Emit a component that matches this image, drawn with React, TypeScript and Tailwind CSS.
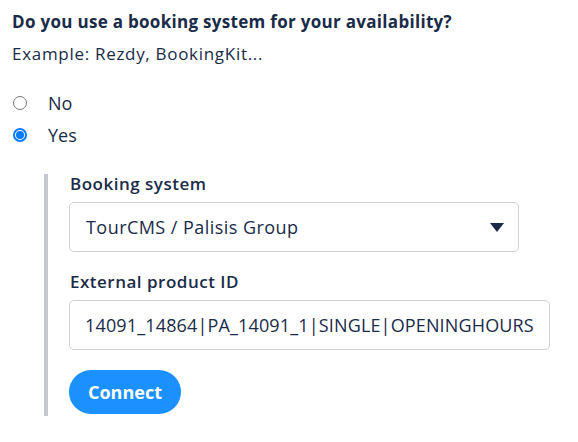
import React from "react";

export default function App() {
  return (
    <div className="w-[578px] h-[442px] bg-white text-[#1a2b49] pl-[12px] pt-[10px]" style={{ fontFamily: "'Open Sans', sans-serif" }}>
      <h2 className="text-[17px] font-bold leading-[24px] tracking-[0.3px]">Do you use a booking system for your availability?</h2>
      <p className="mt-[8px] text-[17px] leading-[24px] tracking-[0.7px]">Example: Rezdy, BookingKit...</p>
      <div className="mt-[25px] flex flex-col gap-[8px]">
        <label className="flex items-center h-[24px]">
          <span className="w-[14px] h-[14px] rounded-full border border-[#767676] bg-white ml-[1px]" />
          <span className="ml-[21px] text-[18px] leading-[24px]">No</span>
        </label>
        <label className="flex items-center h-[24px]">
          <span className="w-[14px] h-[14px] rounded-full border-[2px] border-[#0a7cff] bg-white ml-[1px] flex items-center justify-center">
            <span className="w-[8px] h-[8px] rounded-full bg-[#0a7cff]" />
          </span>
          <span className="ml-[21px] text-[18px] leading-[24px]">Yes</span>
        </label>
      </div>
      <div className="mt-[27px] ml-[32px] border-l-[4px] border-[#c6c8cf] pl-[21px] pb-[2px]">
        <div className="text-[17px] font-semibold leading-[20px] tracking-[0.5px] pl-[1px]">Booking system</div>
        <div className="mt-[8px] w-[450px] h-[50px] border border-[#cfd1d6] rounded-[5px] flex items-center justify-between pl-[16px] pr-[14px]">
          <span className="text-[18px] tracking-[0.45px]">TourCMS / Palisis Group</span>
          <svg width="14" height="9" viewBox="0 0 14 9"><path d="M0 0 H14 L7 9 Z" fill="#1a2b49" /></svg>
        </div>
        <div className="mt-[20px] text-[17px] font-semibold leading-[20px] tracking-[0.5px] pl-[1px]">External product ID</div>
        <div className="mt-[8px] w-[481px] h-[50px] border border-[#cfd1d6] rounded-[5px] flex items-center pl-[15px]">
          <span className="text-[18px] tracking-[0.15px]">14091_14864|PA_14091_1|SINGLE|OPENINGHOURS</span>
        </div>
        <button className="mt-[20px] w-[112px] h-[44px] rounded-full bg-[#1a91ff] text-white text-[18px] font-bold leading-[24px] flex items-center justify-center">Connect</button>
      </div>
    </div>
  );
}
